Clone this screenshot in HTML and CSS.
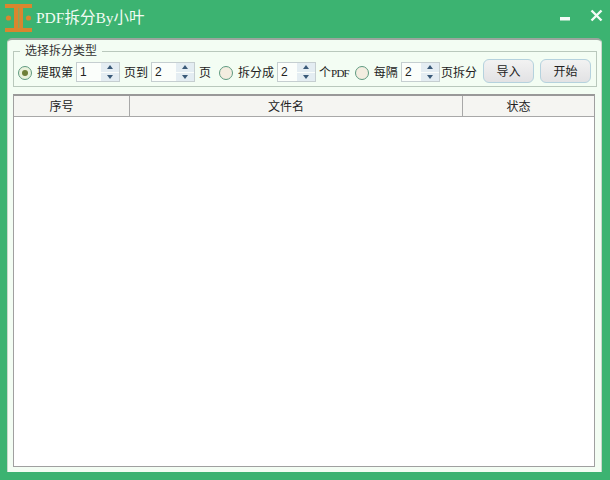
FILE: index.html
```html
<!DOCTYPE html>
<html lang="zh">
<head>
    <meta charset="utf-8">
    <title>PDF拆分By小叶</title>
    <link rel="stylesheet" href="styles.css">
</head>
<body>
    <div class="window">
        <div class="titlebar">
            <svg class="logo" width="28" height="30" viewBox="0 0 28 30">
                <path d="M0 1h27v4H18v20h9v4H0v-4h9V5H0z" fill="#d9862e"/>
                <rect x="13" y="5" width="1.5" height="20" fill="#8fa455"/>
                <circle cx="3.5" cy="15" r="2.6" fill="#d9862e"/>
                <circle cx="23.5" cy="15" r="2.6" fill="#d9862e"/>
            </svg>
            <span class="title">PDF拆分By小叶</span>
            <div class="window-buttons">
                <svg class="minimize" width="10" height="4" viewBox="0 0 10 4"><rect width="10" height="3.5" fill="#f4fbf6"/></svg>
                <svg width="13" height="13" viewBox="0 0 13 13"><path d="M1.5 1.5l10 10M11.5 1.5l-10 10" stroke="#f4fbf6" stroke-width="2.4"/></svg>
            </div>
        </div>

        <div class="panel">
            <fieldset class="group">
                <legend>选择拆分类型</legend>
                <span class="radio checked"></span>
                <span class="label after-radio">提取第</span>
                <span class="spin wide"><span class="spin-value">1</span><span class="spin-arrows"><i class="up"></i><i class="down"></i></span></span>
                <span class="label">页到</span>
                <span class="spin wide"><span class="spin-value">2</span><span class="spin-arrows"><i class="up"></i><i class="down"></i></span></span>
                <span class="label">页</span>
                <span class="radio second"></span>
                <span class="label after-radio">拆分成</span>
                <span class="spin"><span class="spin-value">2</span><span class="spin-arrows"><i class="up"></i><i class="down"></i></span></span>
                <span class="label pdf">个<small>PDF</small></span>
                <span class="radio third"></span>
                <span class="label after-radio">每隔</span>
                <span class="spin"><span class="spin-value">2</span><span class="spin-arrows"><i class="up"></i><i class="down"></i></span></span>
                <span class="label tight">页拆分</span>
                <button class="btn">导入</button>
                <button class="btn">开始</button>
            </fieldset>

            <div class="table">
                <div class="table-head">
                    <div class="col-num">序号</div>
                    <div class="col-name">文件名</div>
                    <div class="col-state">状态</div>
                </div>
            </div>
        </div>
    </div>
</body>
</html>
```

FILE: styles.css
```css
* {
    box-sizing: border-box;
}

body {
    margin: 0;
    background-color: #3cb371;
    font-family: "Liberation Serif", "Noto Sans CJK SC", serif;
    font-size: 12px;
    color: #222;
}

.window {
    width: 610px;
    height: 480px;
    padding: 0 8px 8px 7px;
    display: flex;
    flex-direction: column;
}

.titlebar {
    height: 38px;
    display: flex;
    align-items: center;
    flex-shrink: 0;
}

.logo {
    margin-left: -2px;
    margin-top: -2px;
}

.title {
    margin-left: 3px;
    margin-top: -6px;
    font-size: 15.5px;
    color: #f2fbf4;
}

.window-buttons {
    margin-left: auto;
    margin-top: -7px;
    margin-right: -1px;
    display: flex;
    align-items: center;
    gap: 20px;
}

.minimize {
    margin-top: 6px;
}

.panel {
    flex: 1;
    background-color: #f3fdf3;
    border-top: 2px solid #9aa59d;
    border-left: 1px solid #c9d8cc;
    border-right: 1px solid #c9d8cc;
    border-radius: 5px 5px 0 0;
    padding: 5px 4px 5px 5px;
    display: flex;
    flex-direction: column;
}

.group {
    height: 42px;
    margin: 0;
    padding: 4px 0 0 4px;
    border: 1px solid #b9c8bc;
    display: flex;
    align-items: center;
    flex-shrink: 0;
}

.group legend {
    margin-left: 2px;
    padding: 0 5px;
    line-height: 12px;
    color: #333;
}

.radio {
    width: 14px;
    height: 14px;
    margin-top: 2px;
    border-radius: 50%;
    border: 1px solid #5f9a80;
    background-color: #f3ede0;
    display: flex;
    align-items: center;
    justify-content: center;
    flex-shrink: 0;
}

.radio.checked {
    background-color: #e9f2dc;
}

.radio.checked::after {
    content: "";
    width: 6px;
    height: 6px;
    border-radius: 50%;
    background-color: #6e7f38;
}

.radio.second {
    margin-left: 8px;
}

.radio.third {
    margin-left: 6px;
}

.label {
    margin-left: 4px;
    white-space: nowrap;
}

.label.after-radio {
    margin-left: 5px;
}

.label.pdf {
    margin-left: 3px;
}

.label.tight {
    margin-left: 1px;
}

.pdf small {
    font-size: 11px;
    letter-spacing: -0.8px;
}

.spin {
    width: 39px;
    height: 20px;
    margin-left: 3px;
    background-color: #fbfefb;
    border: 1px solid #c5ced0;
    display: flex;
    align-items: center;
    flex-shrink: 0;
}

.spin.wide {
    width: 44px;
}

.spin-value {
    flex: 1;
    padding-left: 3px;
    font-family: "Liberation Sans", sans-serif;
}

.spin-arrows {
    width: 18px;
    height: 100%;
    display: flex;
    flex-direction: column;
    gap: 1px;
}

.spin-arrows i {
    flex: 1;
    background-color: #e4edf2;
    display: flex;
    align-items: center;
    justify-content: center;
}

.spin-arrows i::after {
    content: "";
    border-left: 3px solid transparent;
    border-right: 3px solid transparent;
}

.spin-arrows .up::after {
    border-bottom: 4px solid #3a5a78;
}

.spin-arrows .down::after {
    border-top: 4px solid #3a5a78;
}

.btn {
    width: 51px;
    height: 24px;
    margin-left: 6px;
    margin-top: -2px;
    padding: 0;
    border: 1px solid #b5d2de;
    border-radius: 6px;
    background: linear-gradient(#f2f2f2, #e2e2e4);
    font-family: inherit;
    font-size: 12px;
    color: #222;
}

.table {
    flex: 1;
    margin-top: 7px;
    margin-right: 2px;
    background-color: #fff;
    border: 1px solid #a0a0a0;
    border-top: 2px solid #999;
}

.table-head {
    height: 21px;
    display: flex;
    background-color: #f5f5f2;
    border-bottom: 1px solid #a8a8a8;
    text-align: center;
    line-height: 22px;
}

.col-num {
    width: 116px;
    padding-right: 20px;
    border-right: 1px solid #a8a8a8;
}

.col-name {
    width: 333px;
    padding-right: 20px;
    border-right: 1px solid #a8a8a8;
}

.col-state {
    flex: 1;
    padding-right: 20px;
}
```
